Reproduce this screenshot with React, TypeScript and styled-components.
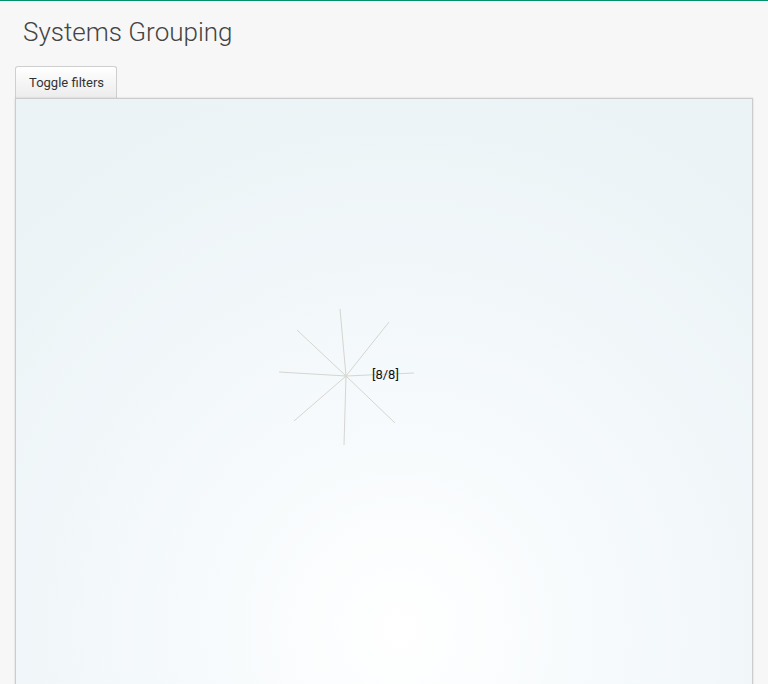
import React from 'react';
import styled, { createGlobalStyle } from 'styled-components';

const GlobalStyle = createGlobalStyle`
  html, body {
    margin: 0;
    padding: 0;
    background: #f7f7f7;
    font-family: Roboto, "Liberation Sans", sans-serif;
  }
`;

const Page = styled.div`
  border-top: 1px solid #00936a;
  min-height: 683px;
  overflow: hidden;
`;

const Title = styled.h1`
  margin: 0;
  padding: 15px 0 0 23px;
  height: 50px;
  font-weight: 300;
  font-size: 26px;
  line-height: 32px;
  color: #444;
`;

const Content = styled.div`
  padding: 0 15px 0 15px;
`;

const ToggleButton = styled.button`
  display: block;
  height: 32px;
  padding: 0 12px 0 13px;
  font-family: Roboto, "Liberation Sans", sans-serif;
  font-size: 13px;
  color: #333;
  background: linear-gradient(#ffffff, #ececec);
  border: 1px solid #cfcfcf;
  border-bottom: none;
  border-radius: 3px 3px 0 0;
  cursor: pointer;
`;

const Panel = styled.div`
  position: relative;
  height: 640px;
  border: 1px solid #cccccc;
  box-shadow: 0 0 2px rgba(0, 0, 0, 0.15);
  background: radial-gradient(
    ellipse 75% 90% at 52% 83%,
    #ffffff 0%,
    #f6fafc 38%,
    #ebf3f6 100%
  );
`;

const Graph = styled.svg`
  position: absolute;
  left: 0;
  top: 0;
`;

const center = { x: 330, y: 277 };
const ends = [
  [324, 210],
  [373, 223],
  [398, 274],
  [379, 324],
  [328, 346],
  [278, 322],
  [263, 273],
  [281, 231],
];

export default function App() {
  return (
    <>
      <GlobalStyle />
      <Page>
        <Title>Systems Grouping</Title>
        <Content>
          <ToggleButton>Toggle filters</ToggleButton>
          <Panel>
            <Graph width="736" height="640">
              {ends.map(([x, y], i) => (
                <line
                  key={i}
                  x1={center.x}
                  y1={center.y}
                  x2={x}
                  y2={y}
                  stroke="#d6d6d0"
                  strokeWidth="1"
                />
              ))}
              <circle cx={center.x} cy={center.y} r="1.5" fill="#d8d8cc" />
              <text
                x="356"
                y="280"
                fontFamily="Roboto, 'Liberation Sans', sans-serif"
                fontSize="13"
                fill="#111"
              >
                [8/8]
              </text>
            </Graph>
          </Panel>
        </Content>
      </Page>
    </>
  );
}
